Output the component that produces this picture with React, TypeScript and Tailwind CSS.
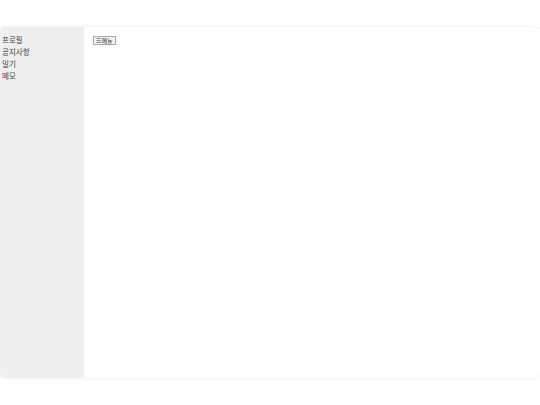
export default function App() {
  const items = ['프로필', '공지사항', '일기', '메모']

  return (
    <div className="h-[405px] w-[540px] bg-white pt-[27px] font-['Noto_Sans_CJK_KR',sans-serif] text-[#444]">
      <div className="flex h-[351px] overflow-hidden rounded-[6px] shadow-[0_0_4px_rgba(0,0,0,0.08)]">
        <aside className="w-[84px] shrink-0 bg-[#efefef] px-[2px] pt-[7px]">
          <ul className="text-[7.5px] leading-[12px]">
            {items.map((item) => (
              <li key={item}>{item}</li>
            ))}
          </ul>
        </aside>
        <main className="flex-1 bg-white pl-[9px] pt-[9px]">
          <button className="flex h-[9px] w-[23px] items-center justify-center border border-[#aaa] bg-[#f0f0f0] text-[6px] leading-none text-[#333]">
            ☰메뉴
          </button>
        </main>
      </div>
    </div>
  )
}
